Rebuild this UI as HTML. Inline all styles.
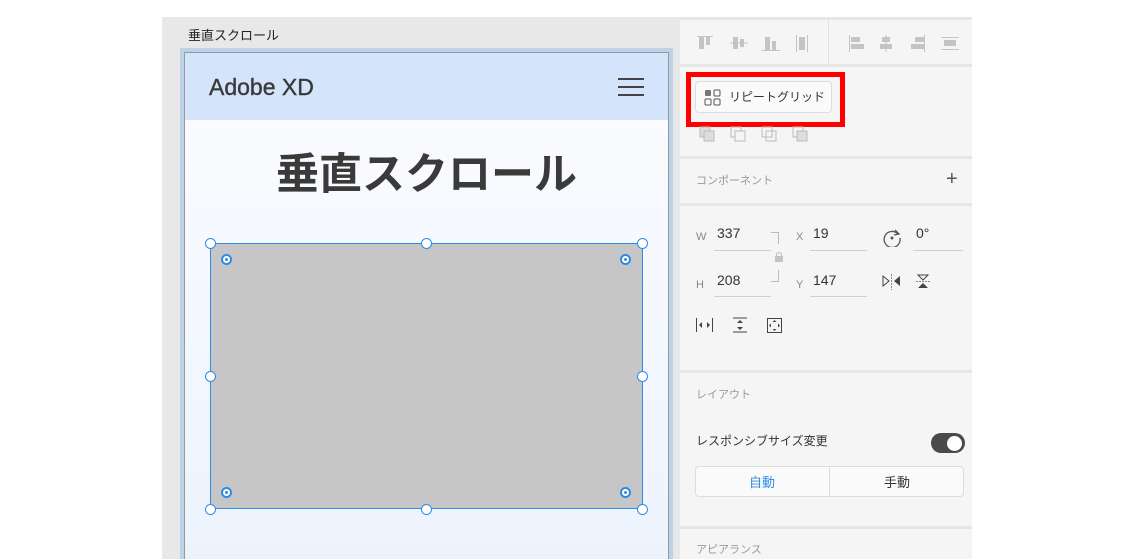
<!DOCTYPE html>
<html><head><meta charset="utf-8"><style>
*{margin:0;padding:0;box-sizing:border-box}
body{width:1134px;height:559px;background:#fff;position:relative;overflow:hidden;font-family:"Liberation Sans","Noto Sans CJK JP",sans-serif}
.a{position:absolute}
.canvas{left:162px;top:17px;width:518px;height:542px;background:#e8e8e8}
.panel{left:680px;top:17px;width:292px;height:542px;background:#f5f5f5}
.hl{position:absolute;left:0;width:292px;height:3px;background:#e6e6e6}
.lbl{color:#888;font-size:11px}
.val{color:#333;font-size:14px}
.ul{position:absolute;height:1px;background:#d0d0d0}
.h{position:absolute;width:11px;height:11px;border:1.5px solid #2d8ce6;border-radius:50%;background:#fff}
.d{position:absolute;width:11px;height:11px;border:2px solid #2d8ce6;border-radius:50%;background:#fff}
.d::after{content:"";position:absolute;left:2px;top:2px;width:3px;height:3px;border-radius:50%;background:#2d8ce6}
</style></head><body>
<div class="a canvas"></div>
<div class="a" style="left:188px;top:25px;font-size:13px;color:#222">垂直スクロール</div>
<div class="a" style="left:180px;top:48px;width:493px;height:511px;background:#bcd2e6"></div>
<div class="a" style="left:184px;top:52px;width:485px;height:507px;background:#999"></div>
<div class="a" style="left:185px;top:53px;width:483px;height:506px;background:linear-gradient(#fbfcff,#edf3fd)"></div>
<div class="a" style="left:185px;top:53px;width:483px;height:67px;background:#d4e4fb"></div>
<div class="a" style="left:209px;top:74px;font-size:23px;color:#3a3a3a;-webkit-text-stroke:0.4px #3a3a3a">Adobe XD</div>
<div class="a" style="left:618px;top:78px;width:26px;height:2px;background:#444"></div>
<div class="a" style="left:618px;top:86px;width:26px;height:2px;background:#444"></div>
<div class="a" style="left:618px;top:94px;width:26px;height:2px;background:#444"></div>
<div class="a" style="left:185px;top:140px;width:483px;text-align:center;font-size:43px;font-weight:bold;color:#3a3a3a">垂直スクロール</div>
<div class="a" style="left:210px;top:243px;width:433px;height:266px;background:#c6c6c6;border:1.5px solid #2d8ce6"></div>
<div class="h" style="left:205px;top:238px"></div><div class="h" style="left:421px;top:238px"></div><div class="h" style="left:637px;top:238px"></div>
<div class="h" style="left:205px;top:371px"></div><div class="h" style="left:637px;top:371px"></div>
<div class="h" style="left:205px;top:504px"></div><div class="h" style="left:421px;top:504px"></div><div class="h" style="left:637px;top:504px"></div>
<div class="d" style="left:221px;top:254px"></div><div class="d" style="left:620px;top:254px"></div>
<div class="d" style="left:221px;top:487px"></div><div class="d" style="left:620px;top:487px"></div>

<div class="a panel">
<div class="hl" style="top:0"></div>
<div class="hl" style="top:47px"></div>
<div class="hl" style="top:139px"></div>
<div class="hl" style="top:186px"></div>
<div class="hl" style="top:353px"></div>
<div class="hl" style="top:509px"></div>
<div class="a" style="left:148px;top:3px;width:1px;height:44px;background:#e2e2e2"></div>
<svg class="a" style="left:14px;top:14px" width="270" height="26" fill="#c4c4c4" stroke="#c4c4c4">
<path d="M3 5.5h16" fill="none"/><rect x="5" y="6" width="5" height="12" stroke="none"/><rect x="12" y="6" width="4" height="8" stroke="none"/>
<path d="M36 12h18" fill="none"/><rect x="39" y="6" width="5" height="12" stroke="none"/><rect x="46" y="8" width="4" height="8" stroke="none"/>
<path d="M68 19.5h18" fill="none"/><rect x="71" y="6" width="5" height="13" stroke="none"/><rect x="78" y="10" width="4" height="9" stroke="none"/>
<path d="M102.5 4v17M113.5 4v17" fill="none"/><rect x="105" y="6" width="6" height="13" stroke="none"/>
<path d="M155.5 4v17" fill="none"/><rect x="157" y="6" width="9" height="5" stroke="none"/><rect x="157" y="13" width="13" height="5" stroke="none"/>
<path d="M192 4v17" fill="none"/><rect x="188" y="6" width="8" height="5" stroke="none"/><rect x="186" y="13" width="12" height="5" stroke="none"/>
<path d="M230.5 4v17" fill="none"/><rect x="221" y="6" width="9" height="5" stroke="none"/><rect x="217" y="13" width="13" height="5" stroke="none"/>
<path d="M247 6.5h18M247 18.5h18" fill="none"/><rect x="250" y="9" width="12" height="6" stroke="none"/>
</svg>
<div class="a" style="left:6px;top:55px;width:159px;height:55px;border:5px solid #f00"></div>
<div class="a" style="left:15px;top:64px;width:137px;height:32px;background:#fafafa;border:1px solid #ddd;border-radius:4px"></div>
<svg class="a" style="left:24px;top:72px" width="17" height="17"><rect x="1" y="1" width="6" height="6" fill="#777" rx="1"/><rect x="10" y="1" width="6" height="6" fill="none" stroke="#555" rx="1"/><rect x="1" y="10" width="6" height="6" fill="none" stroke="#555" rx="1"/><rect x="10" y="10" width="6" height="6" fill="none" stroke="#555" rx="1"/></svg>
<div class="a" style="left:49px;top:71px;font-size:12px;color:#333">リピートグリッド</div>
<svg class="a" style="left:18px;top:108px" width="120" height="20" fill="none" stroke="#bbb"><rect x="2" y="2" width="10" height="10" fill="#ddd"/><rect x="6" y="6" width="10" height="10" fill="#ddd"/><rect x="33" y="2" width="10" height="10"/><rect x="37" y="6" width="10" height="10" fill="#f5f5f5"/><rect x="64" y="2" width="10" height="10"/><rect x="68" y="6" width="10" height="10"/><rect x="95" y="2" width="10" height="10"/><rect x="99" y="6" width="10" height="10" fill="#ddd"/></svg>
<div class="a lbl" style="left:16px;top:155px;font-size:11px;color:#999">コンポーネント</div>
<div class="a" style="left:266px;top:151px;font-size:20px;color:#555">+</div>
<div class="a lbl" style="left:16px;top:214px">W</div><div class="a val" style="left:37px;top:208px">337</div><div class="ul" style="left:34px;top:233px;width:57px"></div>
<div class="a lbl" style="left:16px;top:262px">H</div><div class="a val" style="left:37px;top:255px">208</div><div class="ul" style="left:34px;top:279px;width:57px"></div>
<div class="a" style="left:91px;top:215px;width:8px;height:12px;border-top:1px solid #bbb;border-right:1px solid #bbb"></div>
<div class="a" style="left:91px;top:253px;width:8px;height:12px;border-bottom:1px solid #bbb;border-right:1px solid #bbb"></div>
<div class="a" style="left:96px;top:235px;width:6px;height:5px;border:1px solid #bbb;border-bottom:none;border-radius:3px 3px 0 0"></div>
<div class="a" style="left:95px;top:239px;width:8px;height:6px;background:#c4c4c4"></div>
<div class="a lbl" style="left:116px;top:214px">X</div><div class="a val" style="left:133px;top:208px">19</div><div class="ul" style="left:130px;top:233px;width:57px"></div>
<div class="a lbl" style="left:116px;top:262px">Y</div><div class="a val" style="left:133px;top:255px">147</div><div class="ul" style="left:130px;top:279px;width:57px"></div>
<svg class="a" style="left:202px;top:210px" width="20" height="20" fill="none" stroke="#555" stroke-width="1.3"><path d="M16 7A8 8 0 1 0 18 11"/><path d="M13 3l4 4-5 1"/><circle cx="10" cy="11" r="0.8" fill="#555"/></svg>
<div class="a val" style="left:236px;top:208px">0°</div><div class="ul" style="left:233px;top:233px;width:50px"></div>
<svg class="a" style="left:202px;top:256px" width="50" height="18"><path d="M1 3l6 5-6 5z" fill="none" stroke="#444"/><path d="M18 3l-6 5 6 5z" fill="#444"/><path d="M9.5 1v16" stroke="#888" stroke-dasharray="2 1"/><path d="M36 2h10l-5 5z" fill="none" stroke="#444"/><path d="M36 15h10l-5-5z" fill="#444"/><path d="M34 8.5h14" stroke="#888" stroke-dasharray="2 1"/></svg>
<svg class="a" style="left:15px;top:299px" width="100" height="20" fill="#444" stroke="#444"><path d="M1.5 2v14M17.5 2v14" fill="none"/><path d="M4 9l3-3v6zM15 9l-3-3v6z" stroke="none"/><path d="M38 2h14M38 16h14" fill="none"/><path d="M45 4l3 3h-6zM45 14l3-3h-6z" stroke="none"/><rect x="72.5" y="2.5" width="14" height="14" fill="none"/><path d="M79.5 4l2 2h-4zM79.5 15l2-2h-4zM74 9.5l2-2v4zM85 9.5l-2-2v4z" stroke="none"/></svg>
<div class="a" style="left:16px;top:369px;font-size:11px;color:#999">レイアウト</div>
<div class="a" style="left:16px;top:415px;font-size:12px;color:#333">レスポンシブサイズ変更</div>
<div class="a" style="left:251px;top:416px;width:34px;height:20px;border-radius:10px;background:#4a4a4a"></div>
<div class="a" style="left:267px;top:419px;width:15px;height:15px;border-radius:50%;background:#fff"></div>
<div class="a" style="left:15px;top:449px;width:269px;height:31px;background:#fafafa;border:1px solid #ddd;border-radius:4px"></div>
<div class="a" style="left:149px;top:450px;width:1px;height:29px;background:#ddd"></div>
<div class="a" style="left:15px;top:455px;width:134px;text-align:center;font-size:13px;color:#2d8ce6">自動</div>
<div class="a" style="left:150px;top:455px;width:134px;text-align:center;font-size:13px;color:#333">手動</div>
<div class="a" style="left:16px;top:524px;font-size:11px;color:#999">アピアランス</div>
</div>
</body></html>
